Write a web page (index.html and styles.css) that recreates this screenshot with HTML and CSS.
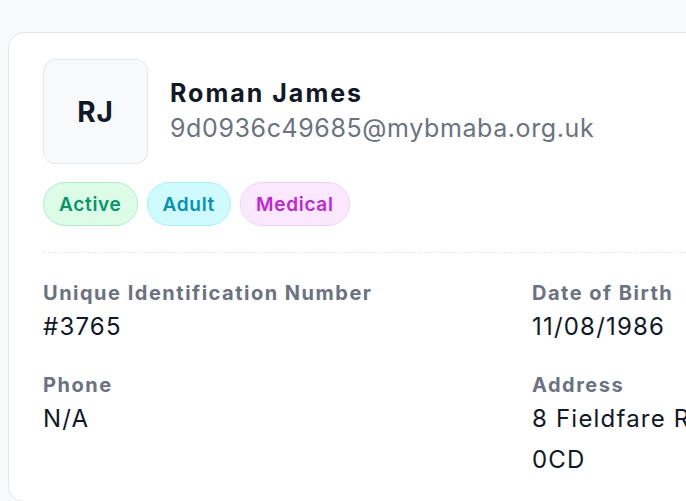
FILE: index.html
```html
<!DOCTYPE html>
<html lang="en">
<head>
<meta charset="utf-8">
<title>Member profile</title>
<link rel="stylesheet" href="styles.css">
</head>
<body>
<div class="card">
  <div class="header">
    <div class="avatar">RJ</div>
    <div class="ident">
      <div class="name">Roman James</div>
      <div class="email">9d0936c49685@mybmaba.org.uk</div>
    </div>
  </div>
  <div class="badges">
    <span class="badge badge-active">Active</span>
    <span class="badge badge-adult">Adult</span>
    <span class="badge badge-medical">Medical</span>
  </div>
  <div class="divider"></div>
  <dl class="details">
    <div class="field">
      <dt class="label">Unique Identification Number</dt>
      <dd class="value">#3765</dd>
    </div>
    <div class="field">
      <dt class="label">Date of Birth</dt>
      <dd class="value">11/08/1986</dd>
    </div>
    <div class="field">
      <dt class="label">Phone</dt>
      <dd class="value">N/A</dd>
    </div>
    <div class="field">
      <dt class="label">Address</dt>
      <dd class="value">8 Fieldfare Road, Peterborough, PE7<br>0CD</dd>
    </div>
  </dl>
</div>
</body>
</html>
```

FILE: styles.css
```css
html, body {
  overflow: hidden;
}
body {
  margin: 0;
  padding: 32px 0 0 8px;
  background: #f8f9fb;
  font-family: Inter, "Liberation Sans", sans-serif;
  color: #111827;
}
.card {
  box-sizing: border-box;
  width: 1040px;
  height: 470px;
  background: #ffffff;
  border: 1px solid #e5e7eb;
  border-radius: 16px;
  padding: 26px 34px;
}
.header {
  display: flex;
  align-items: center;
  gap: 22px;
}
.avatar {
  box-sizing: border-box;
  width: 105px;
  height: 105px;
  flex: none;
  display: flex;
  align-items: center;
  justify-content: center;
  background: #f8f9fb;
  border: 1px solid #e5e7eb;
  border-radius: 12px;
  font-size: 28px;
  font-weight: 700;
  letter-spacing: 0.8px;
}
.ident {
  display: flex;
  flex-direction: column;
  padding-bottom: 2px;
}
.name {
  font-size: 25px;
  font-weight: 700;
  line-height: 34px;
  letter-spacing: 2px;
}
.email {
  font-size: 25px;
  line-height: 36px;
  color: #6b7280;
  letter-spacing: 0.6px;
}
.badges {
  display: flex;
  gap: 9px;
  margin-top: 18px;
}
.badge {
  box-sizing: border-box;
  height: 44px;
  padding: 0 15px;
  display: inline-flex;
  align-items: center;
  border: 1px solid;
  border-radius: 999px;
  font-size: 19px;
  font-weight: 600;
  letter-spacing: 0.7px;
}
.badge-active {
  background: #dcfce7;
  border-color: #a7f3c8;
  color: #059669;
}
.badge-adult {
  background: #cffafe;
  border-color: #a5f3fc;
  color: #0891b2;
}
.badge-medical {
  background: #fae8ff;
  border-color: #f5d0fe;
  color: #c026d3;
}
.divider {
  margin-top: 26px;
  border-top: 1px dashed #e5e7eb;
}
.details {
  margin: 27px 0 0;
  display: grid;
  grid-template-columns: 465px 465px;
  column-gap: 24px;
  row-gap: 25px;
}
.field {
  display: flex;
  flex-direction: column;
}
.label {
  font-size: 20px;
  font-weight: 700;
  line-height: 26px;
  color: #6b7280;
  letter-spacing: 1.5px;
}
.value {
  margin: 0;
  font-size: 24px;
  line-height: 41px;
  color: #111827;
  letter-spacing: 1.2px;
}
```
